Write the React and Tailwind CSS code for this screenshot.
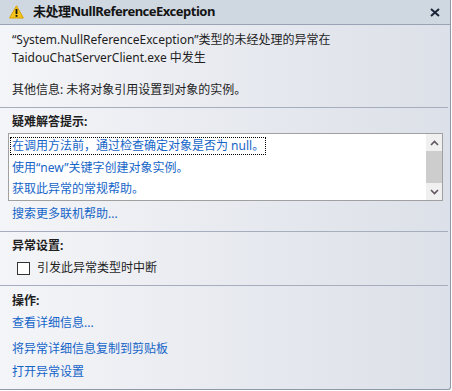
import React from 'react';

const font = { fontFamily: '"Segoe UI", "Noto Sans", "Noto Sans CJK SC", sans-serif' };

const WarningIcon = () => (
    <svg width="15" height="14" viewBox="0 0 15 14">
        <path d="M7.5 0.8 L14.4 13 L0.6 13 Z" fill="#f6c31c" stroke="#d9a400" strokeWidth="1" strokeLinejoin="round" />
        <rect x="6.6" y="4" width="1.8" height="5" fill="#111" />
        <rect x="6.6" y="10" width="1.8" height="1.8" fill="#111" />
    </svg>
);

const CloseIcon = () => (
    <svg width="10" height="9" viewBox="0 0 10 9">
        <path d="M1 1 L9 8 M9 1 L1 8" stroke="#1b2538" strokeWidth="2" />
    </svg>
);

const Separator = () => <div className="h-px bg-[#a6aebd] mr-[2px]" />;

const Link = ({ children, className = '' }) => (
    <div className={`text-[12px] text-[#1565c8] leading-[18px] ${className}`}>{children}</div>
);

const Heading = ({ children }) => (
    <div className="text-[12px] font-bold text-[#1e1e1e] leading-[18px]">{children}</div>
);

const App = () => {
    const tips = [
        '在调用方法前，通过检查确定对象是否为 null。',
        '使用“new”关键字创建对象实例。',
        '获取此异常的常规帮助。',
    ];

    return (
        <div className="w-[452px] h-[391px] bg-white" style={font}>
            <div className="w-[451px] h-[390px] flex flex-col border-r border-b border-[#8f98a8] rounded-br-[3px] overflow-hidden bg-gradient-to-r from-[#f4f5f8] to-[#dce0e8]">
                {/* title bar */}
                <div className="h-[25px] flex items-center bg-[#cfd7e1] border-b border-[#9aa3b3] pl-[9px] pr-[10px]">
                    <WarningIcon />
                    <span className="ml-[9px] text-[13px] font-bold tracking-[-0.5px] text-[#141414]">未处理NullReferenceException</span>
                    <div className="ml-auto flex items-center">
                        <CloseIcon />
                    </div>
                </div>

                {/* message */}
                <div className="px-[12px] pt-[6px] pb-[8px] text-[12px] text-[#1e1e1e] leading-[18px]">
                    <div>“System.NullReferenceException”类型的未经处理的异常在</div>
                    <div>TaidouChatServerClient.exe 中发生</div>
                    <div className="mt-[14px]">其他信息: 未将对象引用设置到对象的实例。</div>
                </div>
                <Separator />

                {/* troubleshooting */}
                <div className="pl-[12px] pt-[5px] pb-[8px]">
                    <Heading>疑难解答提示:</Heading>
                    <div className="ml-[-4px] mt-[2px] w-[435px] h-[68px] bg-white border border-[#a0a0a0] flex">
                        <div className="flex-1 flex flex-col pt-[1px] pl-[1px]">
                            {tips.map((tip, i) => (
                                <div key={tip} className="h-[22px] flex items-center">
                                    <span className={`px-[2px] text-[12px] leading-[18px] text-[#1565c8] ${i === 0 ? 'outline outline-1 outline-dotted outline-[#000] -outline-offset-1' : ''}`}>
                                        {tip}
                                    </span>
                                </div>
                            ))}
                        </div>
                        <div className="w-[16px] bg-[#f0f0f0] flex flex-col items-center">
                            <div className="h-[17px] flex items-center justify-center">
                                <svg width="9" height="6" viewBox="0 0 9 6"><path d="M1 5 L4.5 1.5 L8 5" fill="none" stroke="#605560" strokeWidth="1.6" /></svg>
                            </div>
                            <div className="w-full h-[32px] bg-[#cdcdcd]" />
                            <div className="flex-1 flex items-center justify-center">
                                <svg width="9" height="6" viewBox="0 0 9 6"><path d="M1 1 L4.5 4.5 L8 1" fill="none" stroke="#605560" strokeWidth="1.6" /></svg>
                            </div>
                        </div>
                    </div>
                    <Link className="mt-[4px]">搜索更多联机帮助...</Link>
                </div>
                <Separator />

                {/* exception settings */}
                <div className="pl-[12px] pt-[5px] pb-[8px]">
                    <Heading>异常设置:</Heading>
                    <label className="mt-[4px] flex items-center gap-[7px] pl-[5px] text-[12px] text-[#1e1e1e] leading-[18px]">
                        <span className="w-[13px] h-[13px] border border-[#333] bg-white" />
                        引发此异常类型时中断
                    </label>
                </div>
                <Separator />

                {/* actions */}
                <div className="pl-[12px] pt-[6px]">
                    <Heading>操作:</Heading>
                    <Link className="mt-[4px]">查看详细信息...</Link>
                    <Link className="mt-[8px]">将异常详细信息复制到剪贴板</Link>
                    <Link className="mt-[5px]">打开异常设置</Link>
                </div>
            </div>
        </div>
    );
};

export default App;
